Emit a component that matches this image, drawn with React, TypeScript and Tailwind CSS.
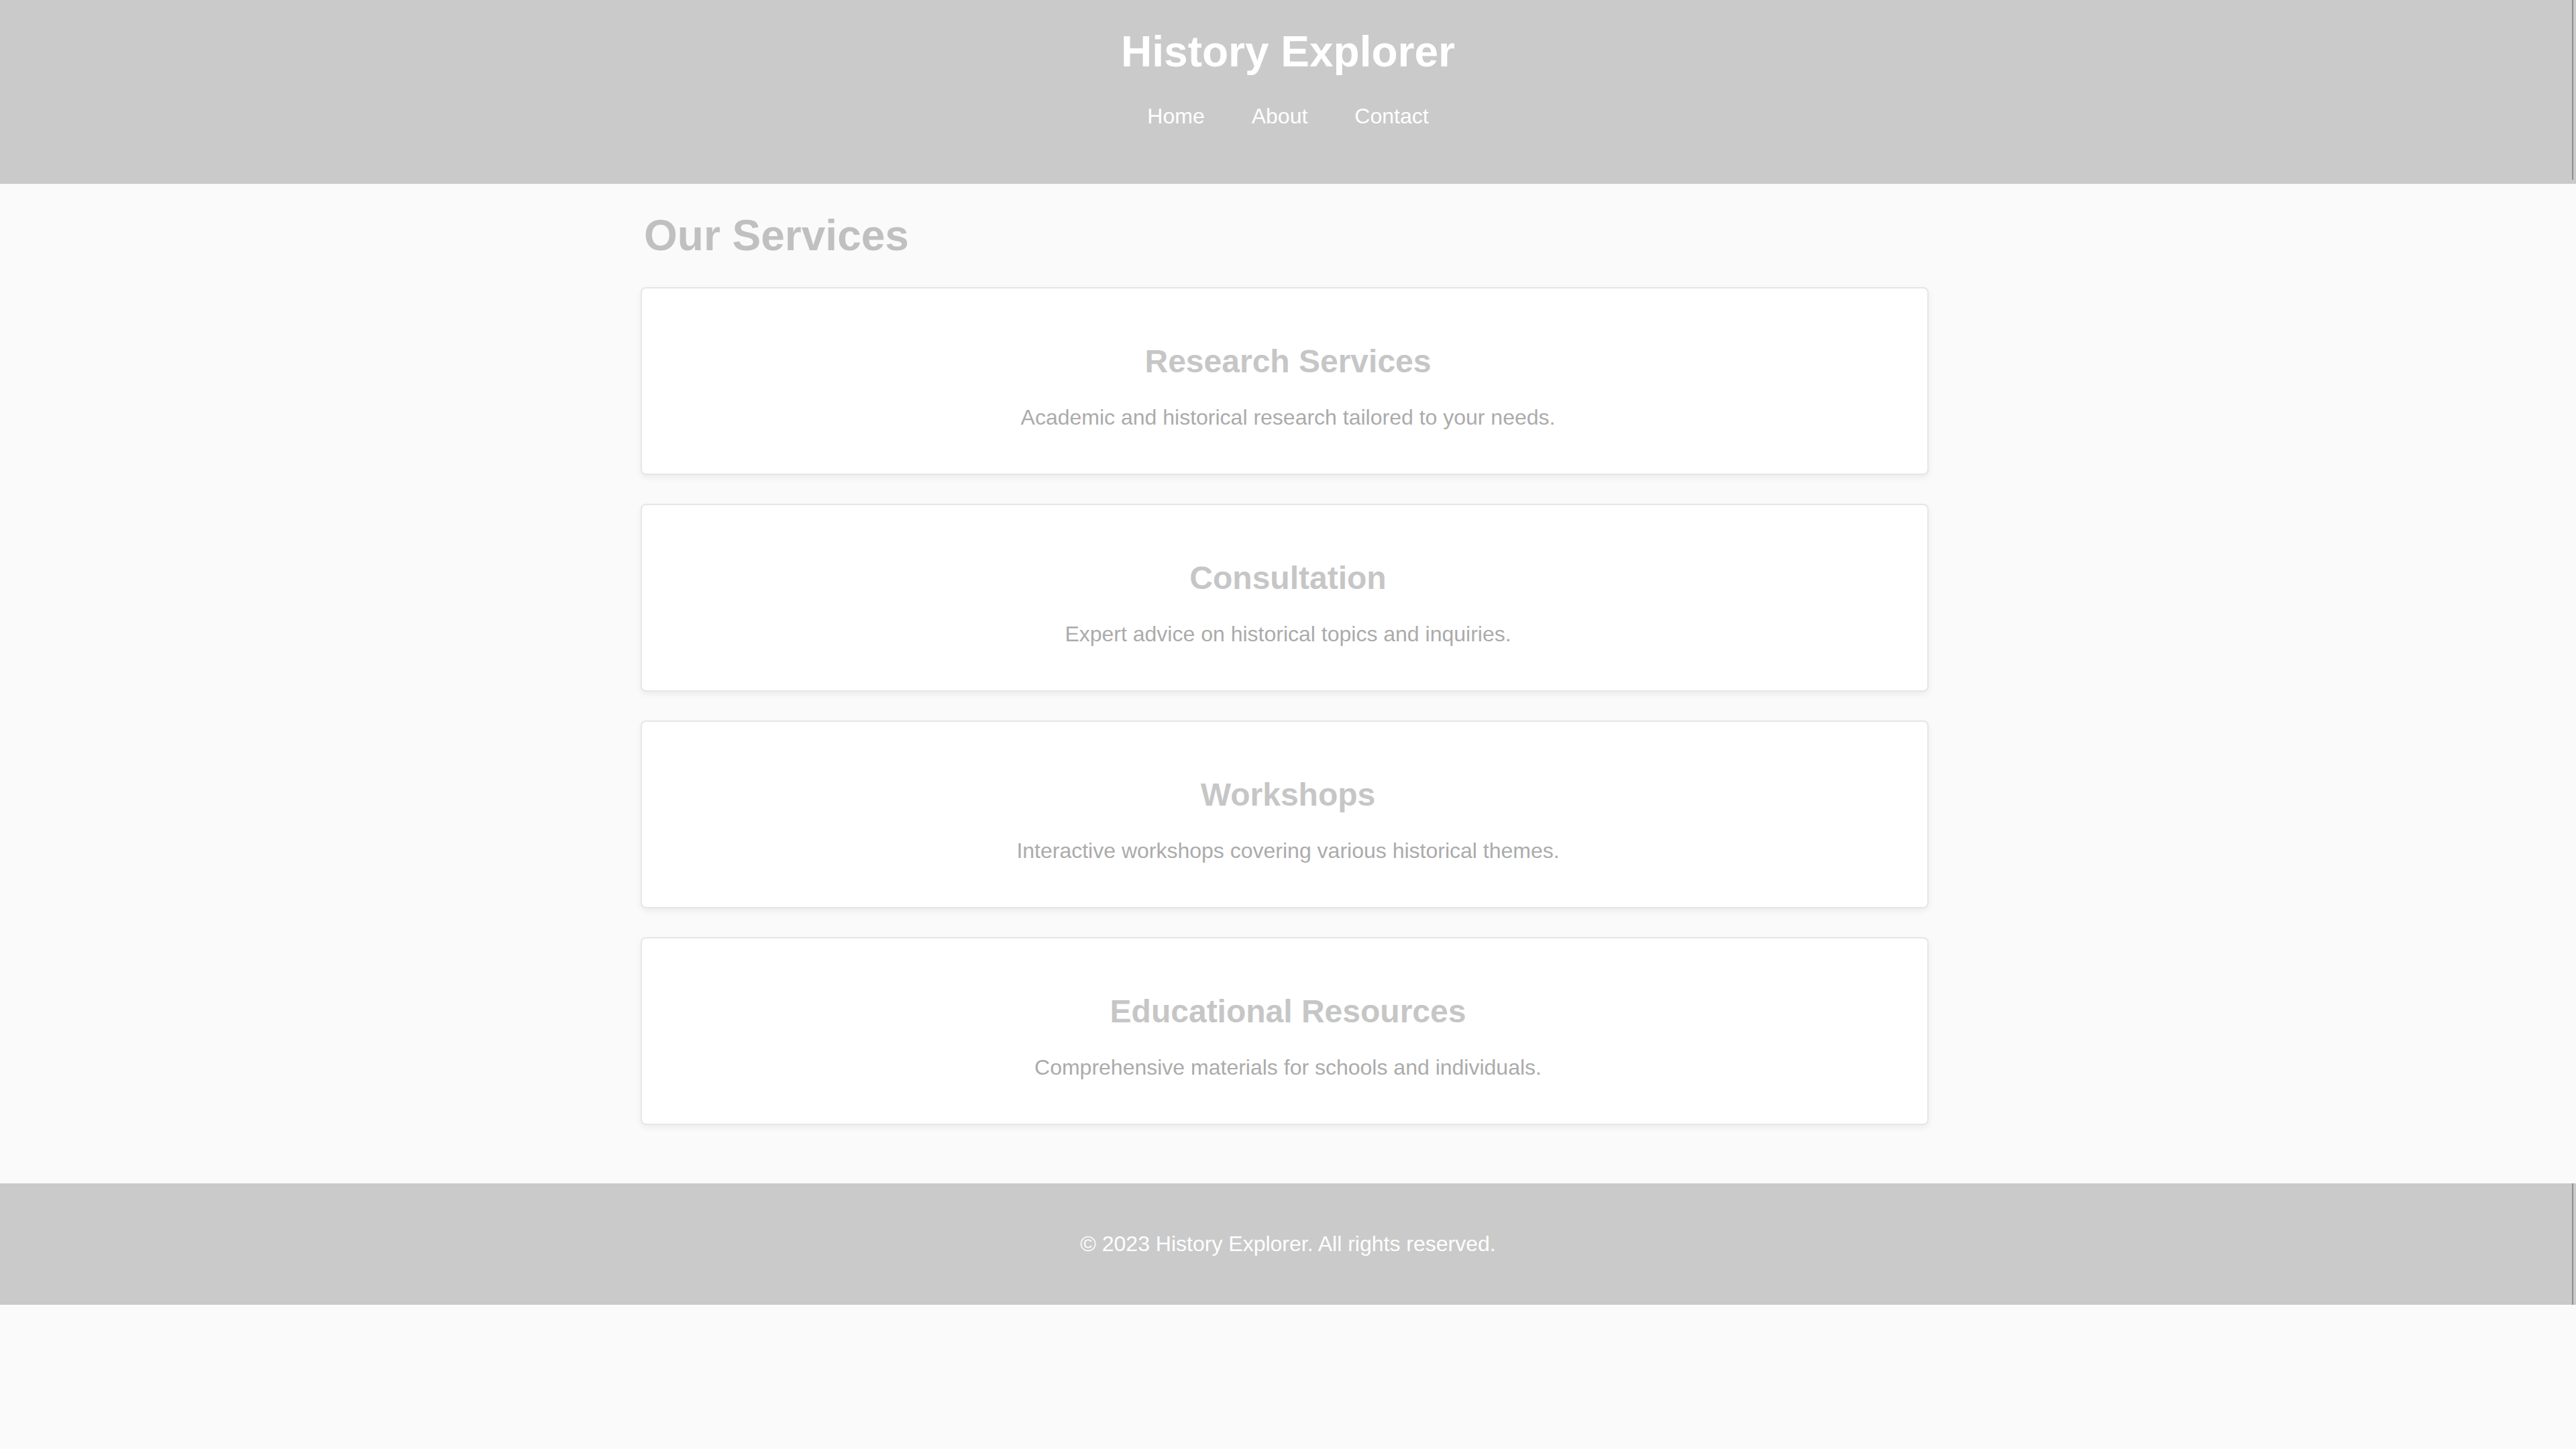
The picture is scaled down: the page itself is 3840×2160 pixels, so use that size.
import React from "react";

const services = [
  { title: "Research Services", text: "Academic and historical research tailored to your needs." },
  { title: "Consultation", text: "Expert advice on historical topics and inquiries." },
  { title: "Workshops", text: "Interactive workshops covering various historical themes." },
  { title: "Educational Resources", text: "Comprehensive materials for schools and individuals." },
];

function ServiceCard({ title, text }: { title: string; text: string }) {
  return (
    <div className="rounded-[8px] border-2 border-[#e6e6e6] bg-white pt-[81px] pb-[65px] pl-[10px] text-center shadow-[0_4px_10px_rgba(0,0,0,0.06)]">
      <h3 className="text-[48px] leading-[55px] font-bold text-[#c6c6c6]">{title}</h3>
      <p className="mt-[38px] text-[32px] leading-[37px] text-[#ababab]">{text}</p>
    </div>
  );
}

export default function App() {
  return (
    <div className="min-h-[2160px] bg-[#fafafa] font-['Liberation_Sans',Arial,sans-serif]">
      {/* Header */}
      <header className="relative bg-[#cacaca] pt-[40px] pb-[82px] text-center text-white">
        <h1 className="text-[64px] leading-[74px] font-bold">History Explorer</h1>
        <nav className="mt-[41px] flex justify-center gap-[70px] text-[32px] leading-[37px]">
          <a href="#">Home</a>
          <a href="#">About</a>
          <a href="#">Contact</a>
        </nav>
        <span className="absolute top-0 right-[4px] bottom-[6px] w-[2px] bg-[#8f8f8f]" />
      </header>

      {/* Services */}
      <main className="mx-auto w-[1930px] pr-[10px] pt-[40px] pb-[87px]">
        <h2 className="mb-[40px] pl-[5px] text-[64px] leading-[74px] font-bold text-[#c0c0c0]">Our Services</h2>
        <div className="flex flex-col gap-[43px]">
          {services.map((s) => (
            <ServiceCard key={s.title} title={s.title} text={s.text} />
          ))}
        </div>
      </main>

      {/* Footer */}
      <footer className="relative bg-[#cacaca] py-[72px] text-center text-[32px] leading-[37px] text-white">
        <p>© 2023 History Explorer. All rights reserved.</p>
        <span className="absolute top-0 right-[4px] bottom-0 w-[2px] bg-[#8f8f8f]" />
      </footer>
    </div>
  );
}
